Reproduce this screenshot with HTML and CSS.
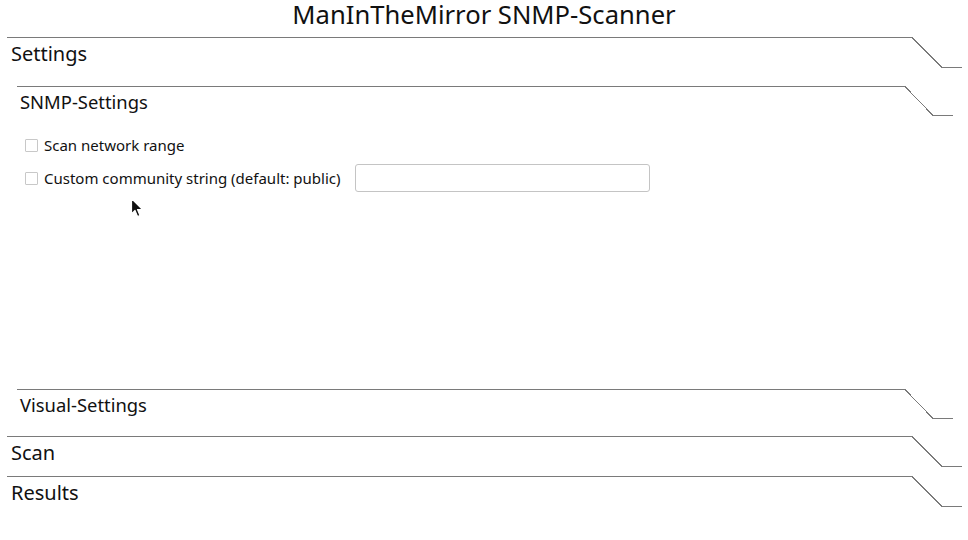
FILE: index.html
```html
<!DOCTYPE html>
<html lang="en">
<head>
<meta charset="utf-8">
<title>ManInTheMirror SNMP-Scanner</title>
<link rel="stylesheet" href="styles.css">
</head>
<body>
<h1 class="title">ManInTheMirror SNMP-Scanner</h1>

<section class="panel panel-top">
  <div class="head">
    <div class="head-line"><span class="head-text">Settings</span></div>
    <svg class="corner" width="50" height="31" viewBox="0 0 50 31"><path d="M0 0.5 L30 30.5 L50 30.5" fill="none" stroke="#7a7a7a" stroke-width="1" shape-rendering="crispEdges"/></svg>
  </div>
  <div class="panel-body">
    <section class="panel panel-sub">
      <div class="head">
        <div class="head-line"><span class="head-text">SNMP-Settings</span></div>
        <svg class="corner" width="48" height="30" viewBox="0 0 48 30"><path d="M0 0.5 L28 29.5 L48 29.5" fill="none" stroke="#7a7a7a" stroke-width="1" shape-rendering="crispEdges"/></svg>
      </div>
      <div class="sub-body">
        <label class="row">
          <input type="checkbox" class="check">
          <span>Scan network range</span>
        </label>
        <div class="row row-input">
          <label class="row-label">
            <input type="checkbox" class="check">
            <span>Custom community string (default: public)</span>
          </label>
          <input type="text" class="text-field">
        </div>
      </div>
    </section>
    <section class="panel panel-sub">
      <div class="head">
        <div class="head-line"><span class="head-text">Visual-Settings</span></div>
        <svg class="corner" width="48" height="30" viewBox="0 0 48 30"><path d="M0 0.5 L28 29.5 L48 29.5" fill="none" stroke="#7a7a7a" stroke-width="1" shape-rendering="crispEdges"/></svg>
      </div>
    </section>
  </div>
</section>

<section class="panel panel-top">
  <div class="head">
    <div class="head-line"><span class="head-text">Scan</span></div>
    <svg class="corner" width="50" height="31" viewBox="0 0 50 31"><path d="M0 0.5 L30 30.5 L50 30.5" fill="none" stroke="#7a7a7a" stroke-width="1" shape-rendering="crispEdges"/></svg>
  </div>
</section>

<section class="panel panel-top">
  <div class="head">
    <div class="head-line"><span class="head-text">Results</span></div>
    <svg class="corner" width="50" height="31" viewBox="0 0 50 31"><path d="M0 0.5 L30 30.5 L50 30.5" fill="none" stroke="#7a7a7a" stroke-width="1" shape-rendering="crispEdges"/></svg>
  </div>
</section>

<svg class="cursor" width="14" height="22" viewBox="0 0 14 22"><path d="M1.5 1.5 L1.5 17 L5 13.5 L7.5 19.5 L10 18.5 L7.5 12.5 L12.5 12.5 Z" fill="#111" stroke="#fff" stroke-width="1.2" stroke-linejoin="round"/></svg>
</body>
</html>
```

FILE: styles.css
```css
html, body {
  margin: 0;
  padding: 0;
  background: #ffffff;
}

body {
  font-family: "Noto Sans", "Open Sans", sans-serif;
  color: #111;
  position: relative;
  width: 968px;
  height: 540px;
  overflow: hidden;
}

.title {
  margin: 0;
  height: 37px;
  font-size: 25.6px;
  font-weight: 400;
  line-height: 30px;
  text-align: center;
  color: #111;
}

.panel-top {
  margin: 0 6px 0 7px;
}

.head {
  display: flex;
  align-items: flex-start;
  height: 40px;
}

.head-line {
  flex: 1;
  border-top: 1px solid #7a7a7a;
  height: 39px;
}

.corner {
  display: block;
  flex: none;
}

.panel-top > .head .head-text {
  display: block;
  font-size: 20px;
  line-height: 24px;
  padding: 4px 0 0 4px;
}

.panel-body {
  padding: 9px 9px 7px 10px;
}

.panel-sub .head-text {
  display: block;
  font-size: 18.4px;
  line-height: 22px;
  padding: 4px 0 0 3px;
}

.sub-body {
  height: 263px;
  box-sizing: border-box;
  padding: 9px 0 0 8px;
  display: flex;
  flex-direction: column;
  gap: 9px;
}

.row {
  display: flex;
  align-items: center;
  gap: 6px;
  height: 20px;
  font-size: 15px;
}

.row-input {
  height: 28px;
  gap: 14px;
}

.row-label {
  display: flex;
  align-items: center;
  gap: 6px;
}

.check {
  appearance: none;
  -webkit-appearance: none;
  margin: 0;
  width: 13px;
  height: 13px;
  border: 1px solid #c8c8c8;
  border-radius: 1px;
  background: #fff;
  box-sizing: border-box;
}

.text-field {
  width: 295px;
  height: 28px;
  box-sizing: border-box;
  margin: 0;
  border: 1px solid #c4c4c4;
  border-radius: 3px;
  background: #fff;
  font: inherit;
}

.cursor {
  position: absolute;
  left: 130px;
  top: 197px;
}
```
